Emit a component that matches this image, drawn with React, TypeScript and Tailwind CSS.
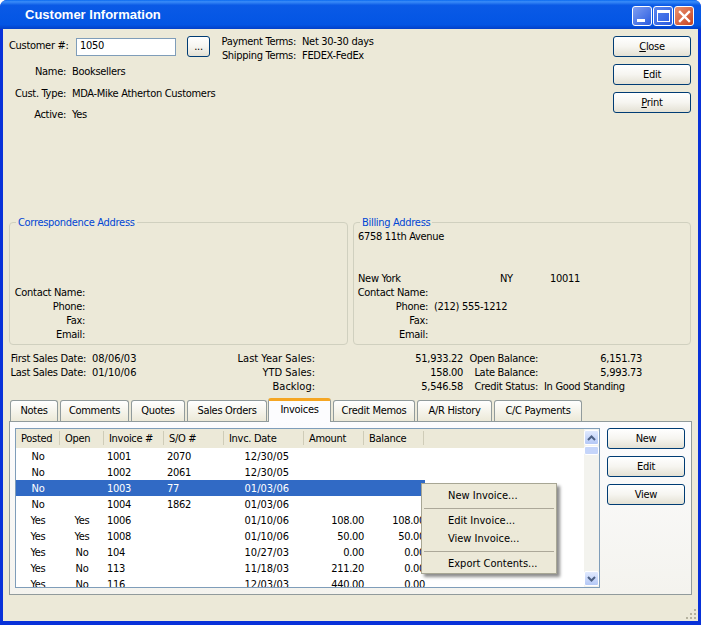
const FONT = "font-['DejaVu_Sans_Condensed','DejaVu_Sans',sans-serif]";

const COLS = "grid grid-cols-[44px_44px_60px_60px_80px_60px_61px_159px] grid-rows-[16px]";

const INVOICES = [
  { posted: "No", open: "", inv: "1001", so: "2070", date: "12/30/05", amount: "", balance: "" },
  { posted: "No", open: "", inv: "1002", so: "2061", date: "12/30/05", amount: "", balance: "" },
  { posted: "No", open: "", inv: "1003", so: "77", date: "01/03/06", amount: "", balance: "", selected: true },
  { posted: "No", open: "", inv: "1004", so: "1862", date: "01/03/06", amount: "", balance: "" },
  { posted: "Yes", open: "Yes", inv: "1006", so: "", date: "01/10/06", amount: "108.00", balance: "108.00" },
  { posted: "Yes", open: "Yes", inv: "1008", so: "", date: "01/10/06", amount: "50.00", balance: "50.00" },
  { posted: "Yes", open: "No", inv: "104", so: "", date: "10/27/03", amount: "0.00", balance: "0.00" },
  { posted: "Yes", open: "No", inv: "113", so: "", date: "11/18/03", amount: "211.20", balance: "0.00" },
  { posted: "Yes", open: "No", inv: "116", so: "", date: "12/03/03", amount: "440.00", balance: "0.00" },
];

const TABS = [
  { label: "Notes", w: "w-[48px]" },
  { label: "Comments", w: "w-[69px]" },
  { label: "Quotes", w: "w-[54px]" },
  { label: "Sales Orders", w: "w-[80px]" },
  { label: "Invoices", w: "w-[63px] -ml-[1px]", active: true },
  { label: "Credit Memos", w: "w-[82px]" },
  { label: "A/R History", w: "w-[75px]" },
  { label: "C/C Payments", w: "w-[88px]" },
];

function XpButton({ children, className = "" }: { children: React.ReactNode; className?: string }) {
  return (
    <button className={`h-[21px] shrink-0 rounded-[3px] border border-[#003c74] bg-gradient-to-b from-white via-[#f6f5f0] to-[#e4e1d4] text-black text-center leading-[19px] ${className}`}>
      {children}
    </button>
  );
}

function Field({ label, value, labelWidth, className = "", valueClass = "" }: { label: string; value?: string; labelWidth: string; className?: string; valueClass?: string }) {
  return (
    <div className={`flex h-[14px] leading-[14px] ${className}`}>
      <span className={`${labelWidth} flex shrink-0 justify-end whitespace-nowrap`}>{label}</span>
      {value && <span className={`ml-[6px] whitespace-nowrap ${valueClass}`}>{value}</span>}
    </div>
  );
}

function GroupBox({ title, className = "", children }: { title: string; className?: string; children: React.ReactNode }) {
  return (
    <div className={`relative h-[123px] shrink-0 rounded-[4px] border border-[#d0d0bf] ${className}`}>
      <span className="absolute left-[6px] top-[-7px] h-[14px] bg-[#ece9d8] px-[2px] leading-[14px] text-[#0046d5]">{title}</span>
      {children}
    </div>
  );
}

function ScrollArrow({ up }: { up?: boolean }) {
  return (
    <div className="flex h-[15px] w-[15px] items-center justify-center rounded-[2px] border border-white bg-gradient-to-b from-[#e1eafe] to-[#b4c8f6]">
      <svg width="9" height="6" viewBox="0 0 9 6" fill="none" stroke="#4d6185" strokeWidth="2">
        <path d={up ? "M1 5 L4.5 1.5 L8 5" : "M1 1 L4.5 4.5 L8 1"} />
      </svg>
    </div>
  );
}

function MenuItem({ children, className = "" }: { children: React.ReactNode; className?: string }) {
  return <div className={`pl-[26px] leading-[18px] h-[18px] tracking-normal ${className}`}>{children}</div>;
}

export default function App() {
  return (
    <div className={`${FONT} relative flex h-[625px] w-[701px] flex-col overflow-hidden rounded-t-[7px] bg-[#0831d9] text-[11px] tracking-[-0.3px] text-black`}>
      {/* Title bar */}
      <div className="flex h-[29px] shrink-0 items-center justify-between bg-[linear-gradient(to_bottom,#0a6af0_0%,#3a8cf8_6%,#0a5ae6_18%,#0355e4_85%,#0340c8_100%)] pl-[25px] pr-[7px]">
        <span className="font-['Liberation_Sans',Arial,sans-serif] text-[13px] font-bold tracking-normal text-white">Customer Information</span>
        <div className="mt-[3px] flex gap-[1px]">
          <div className="flex h-[20px] w-[20px] items-end rounded-[3px] border border-white bg-gradient-to-br from-[#7f9df0] to-[#2a5ae0] px-[4px] pb-[3px]">
            <div className="h-[3px] w-[8px] bg-white" />
          </div>
          <div className="flex h-[20px] w-[20px] items-center justify-center rounded-[3px] border border-white bg-gradient-to-br from-[#5a85ee] to-[#2a5ae0]">
            <div className="h-[12px] w-[13px] border border-t-[3px] border-white" />
          </div>
          <div className="flex h-[20px] w-[20px] items-center justify-center rounded-[3px] border border-white bg-gradient-to-br from-[#e9916f] to-[#c8401c]">
            <svg width="13" height="13" viewBox="0 0 13 13" stroke="white" strokeWidth="2.4" strokeLinecap="square">
              <path d="M2 2 L11 11 M11 2 L2 11" />
            </svg>
          </div>
        </div>
      </div>

      {/* Window body */}
      <div className="relative mx-[3px] mb-[4px] flex-1 bg-[#ece9d8] pl-[6px] pr-[7px]">
        {/* Header */}
        <div className="flex h-[186px] pt-[7px]">
          <div className="flex-1">
            <div className="flex h-[21px] items-center">
              <span className="w-[57px] whitespace-nowrap text-right">Customer #:</span>
              <div className="ml-[10px] flex h-[18px] w-[100px] items-center border border-[#7f9db9] bg-white pl-[3px]">1050</div>
              <XpButton className="ml-[11px] w-[23px]">...</XpButton>
              <div className="ml-[11px] -mt-[1px] self-start">
                <Field label="Payment Terms:" value="Net 30-30 days" labelWidth="w-[75px]" />
                <Field label="Shipping Terms:" value="FEDEX-FedEx" labelWidth="w-[75px]" />
              </div>
            </div>
            <Field label="Name:" value="Booksellers" labelWidth="w-[57px]" className="mt-[8px]" />
            <Field label="Cust. Type:" value="MDA-Mike Atherton Customers" labelWidth="w-[57px]" className="mt-[8px]" />
            <Field label="Active:" value="Yes" labelWidth="w-[57px]" className="mt-[7px]" />
          </div>
          <div className="flex w-[78px] flex-col gap-[7px]">
            <XpButton><u>C</u>lose</XpButton>
            <XpButton>Edit</XpButton>
            <XpButton><u>P</u>rint</XpButton>
          </div>
        </div>

        {/* Addresses */}
        <div className="mt-[7px] flex gap-[5px]">
          <GroupBox title="Correspondence Address" className="w-[339px] pt-[63px] pl-[1px]">
            <Field label="Contact Name:" labelWidth="w-[74px]" />
            <Field label="Phone:" labelWidth="w-[74px]" />
            <Field label="Fax:" labelWidth="w-[74px]" />
            <Field label="Email:" labelWidth="w-[74px]" />
          </GroupBox>
          <GroupBox title="Billing Address" className="w-[338px] pt-[7px] pl-[4px]">
            <div className="h-[14px] leading-[14px]">6758 11th Avenue</div>
            <div className="mt-[28px] flex h-[14px] leading-[14px]">
              <span className="w-[142px]">New York</span>
              <span className="w-[50px]">NY</span>
              <span>10011</span>
            </div>
            <Field label="Contact Name:" labelWidth="w-[70px]" />
            <Field label="Phone:" value="(212) 555-1212" labelWidth="w-[70px]" />
            <Field label="Fax:" labelWidth="w-[70px]" />
            <Field label="Email:" labelWidth="w-[70px]" />
          </GroupBox>
        </div>

        {/* Sales summary */}
        <div className="mt-[7px] flex h-[42px] leading-[14px]">
          <div className="w-[135px]">
            <Field label="First Sales Date:" value="08/06/03" labelWidth="w-[77px]" valueClass="tracking-normal" />
            <Field label="Last Sales Date:" value="01/10/06" labelWidth="w-[77px]" valueClass="tracking-normal" />
          </div>
          <div className="ml-[37px] w-[134px] text-right tracking-normal">
            <div>Last Year Sales:</div>
            <div>YTD Sales:</div>
            <div>Backlog:</div>
          </div>
          <div className="w-[148px] text-right">
            <div>51,933.22</div>
            <div>158.00</div>
            <div>5,546.58</div>
          </div>
          <div className="ml-[5px] w-[70px] whitespace-nowrap text-right">
            <div>Open Balance:</div>
            <div>Late Balance:</div>
            <div>Credit Status:</div>
          </div>
          <div className="ml-[6px] w-[98px]">
            <div className="text-right">6,151.73</div>
            <div className="text-right">5,993.73</div>
            <div className="whitespace-nowrap">In Good Standing</div>
          </div>
        </div>

        {/* Tabs */}
        <div className="mt-[6px] flex h-[21px] items-end gap-[2px] pl-[1px]">
          {TABS.map((tab) =>
            tab.active ? (
              <div key={tab.label} className={`${tab.w} z-10 -mb-[1px] h-[24px] rounded-t-[3px] border-x border-[#919b9c] border-t-[3px] border-t-[#f5a623] bg-[#fcfcfe] text-center leading-[17px]`}>
                {tab.label}
              </div>
            ) : (
              <div key={tab.label} className={`${tab.w} h-[21px] rounded-t-[3px] border-x border-t border-[#919b9c] bg-gradient-to-b from-white to-[#ece9d8] text-center leading-[19px]`}>
                {tab.label}
              </div>
            ),
          )}
        </div>

        {/* Tab panel */}
        <div className="relative flex h-[174px] w-[683px] gap-[7px] border border-[#919b9c] bg-gradient-to-b from-[#fcfcfe] to-[#f4f3ee] pl-[5px] pt-[6px]">
          {/* Invoice list */}
          <div className="flex h-[160px] w-[585px] shrink-0 overflow-hidden border border-[#7f9db9] bg-white">
            <div className="w-[568px] overflow-hidden">
              <div className="grid h-[19px] grid-cols-[44px_44px_60px_60px_80px_60px_60px_160px] bg-[#ece9d8]">
                {["Posted", "Open", "Invoice #", "S/O #", "Invc. Date", "Amount", "Balance"].map((h) => (
                  <div key={h} className="mt-[2px] h-[14px] border-r border-[#cfccb8] pl-[5px] leading-[16px]">{h}</div>
                ))}
              </div>
              {INVOICES.map((row) => {
                const bg = row.selected ? "bg-[#316ac5]" : "";
                return (
                  <div key={row.inv} className={`${COLS} h-[16px] leading-[18px] ${row.selected ? "text-white" : ""}`}>
                    <div className={`text-center ${bg}`}>{row.posted}</div>
                    <div className={`text-center ${bg}`}>{row.open}</div>
                    <div className={`pl-[3px] ${bg}`}>{row.inv}</div>
                    <div className={`pl-[3px] ${bg}`}>{row.so}</div>
                    <div className={`pr-[15px] text-right tracking-normal ${bg}`}>{row.date}</div>
                    <div className={`text-right ${bg}`}>{row.amount}</div>
                    <div className={`text-right ${bg}`}>{row.balance}</div>
                    <div />
                  </div>
                );
              })}
            </div>
            {/* Scrollbar */}
            <div className="flex w-[15px] flex-col justify-between bg-[#f3f3ee] py-[1px]">
              <div>
                <ScrollArrow up />
                <div className="mt-[1px] h-[9px] w-[15px] rounded-[2px] border border-white bg-[#c5d5fa]" />
              </div>
              <ScrollArrow />
            </div>
          </div>

          <div className="flex w-[78px] flex-col gap-[7px]">
            <XpButton>New</XpButton>
            <XpButton>Edit</XpButton>
            <XpButton>View</XpButton>
          </div>
        </div>

        {/* Resize grip */}
        <svg className="absolute bottom-[1px] right-[1px]" width="12" height="12" viewBox="0 0 12 12" fill="#b5b29f">
          <rect x="9" y="1" width="2" height="2" />
          <rect x="5" y="5" width="2" height="2" />
          <rect x="9" y="5" width="2" height="2" />
          <rect x="1" y="9" width="2" height="2" />
          <rect x="5" y="9" width="2" height="2" />
          <rect x="9" y="9" width="2" height="2" />
        </svg>
      </div>

      {/* Context menu */}
      <div className="absolute left-[421px] top-[483px] h-[91px] w-[136px] border border-[#a7a694] bg-[#ece9d8] pt-[3px] shadow-[3px_3px_3px_rgba(0,0,0,0.45)]">
        <MenuItem>New Invoice...</MenuItem>
        <div className="mx-[2px] mt-[3px] mb-[3px] h-px bg-[#aca899]" />
        <MenuItem>Edit Invoice...</MenuItem>
        <MenuItem>View Invoice...</MenuItem>
        <div className="mx-[2px] mt-[3px] mb-[3px] h-px bg-[#aca899]" />
        <MenuItem>Export Contents...</MenuItem>
      </div>
    </div>
  );
}
